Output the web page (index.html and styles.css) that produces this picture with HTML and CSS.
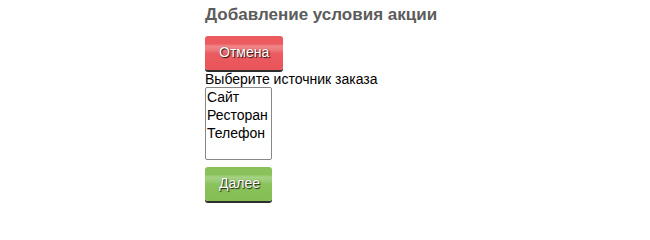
FILE: index.html
```
<!DOCTYPE html>
<html lang="ru">
<head>
<meta charset="utf-8">
<title>Добавление условия акции</title>
<link rel="stylesheet" href="styles.css">
</head>
<body>
<div class="page">
  <h3 class="title">Добавление условия акции</h3>
  <div class="actions">
    <button class="btn btn-red" type="button">Отмена</button>
  </div>
  <label class="label" for="source">Выберите источник заказа</label>
  <select class="list" id="source" size="4">
    <option>Сайт</option>
    <option>Ресторан</option>
    <option>Телефон</option>
  </select>
  <div class="actions next">
    <button class="btn btn-green" type="button">Далее</button>
  </div>
</div>
</body>
</html>
```
FILE: styles.css
```
html, body {
  margin: 0;
  padding: 0;
  background: #fff;
}
.page {
  padding: 3px 0 0 205px;
  font-family: "Liberation Sans", Arial, sans-serif;
  font-size: 14px;
  color: #000;
  display: flex;
  flex-direction: column;
  align-items: flex-start;
}
.title {
  margin: 0;
  font-size: 17px;
  line-height: 24px;
  font-weight: bold;
  color: #5c5c5c;
}
.actions {
  margin-top: 9px;
  display: flex;
}
.btn {
  font-family: "Liberation Sans", Arial, sans-serif;
  font-size: 14px;
  line-height: 16px;
  height: 34px;
  padding: 0 14px 2px;
  border: 0;
  border-radius: 3px;
  color: #fff;
  text-shadow: 1px 1px 1px rgba(0, 0, 0, 0.8), 0 0 1px rgba(0, 0, 0, 0.4);
  box-shadow: 0 2px 0 #2d2d2d;
  margin-bottom: 2px;
}
.btn-red {
  width: 78px;
  background: linear-gradient(to bottom, #ea5a5f 0%, #ea5a5f 22%, #f08689 30%, #ee7a7d 40%, #ea5b5f 52%, #e9555a 100%);
}
.btn-green {
  width: 67px;
  background: linear-gradient(to bottom, #89c15a 0%, #89c15a 22%, #a6d383 30%, #9bcb74 40%, #8ac25b 52%, #85be55 100%);
}
.label {
  margin-top: 0;
  line-height: 15px;
  display: block;
}
.list {
  box-sizing: border-box;
  width: 67px;
  height: 73px;
  margin: 0;
  padding: 0;
  border: 1px solid #888;
  font-family: "Liberation Sans", Arial, sans-serif;
  font-size: 14px;
  color: #000;
  overflow: hidden;
  outline: none;
}
.list option {
  padding: 1px 1px 0 1px;
  line-height: 17px;
}
.next {
  margin-top: 7px;
}
```
